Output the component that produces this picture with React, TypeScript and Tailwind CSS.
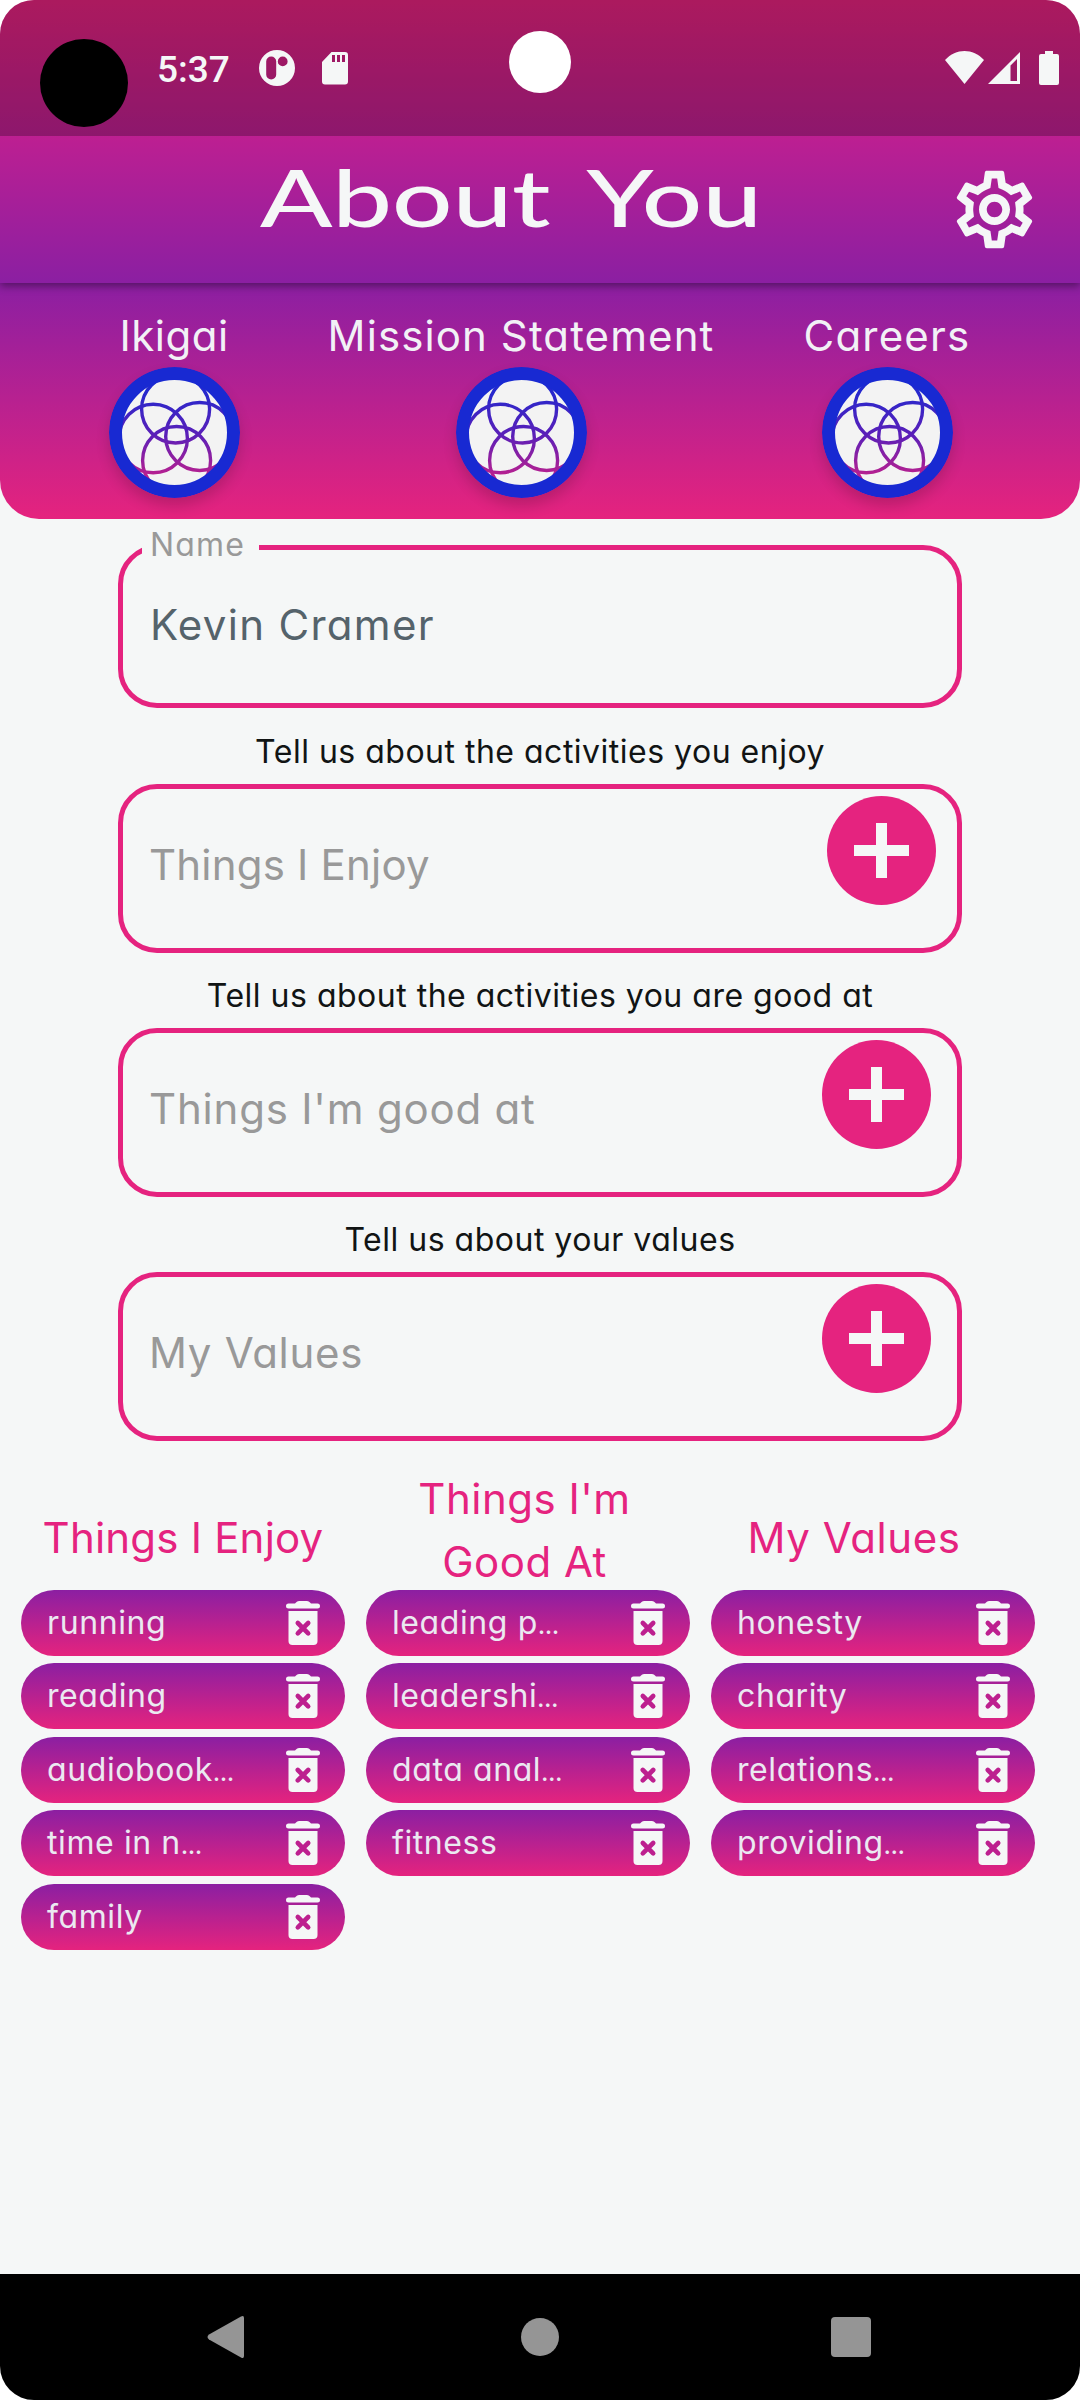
import { MdOutlineSettings } from 'react-icons/md';

const links = [
  { label: 'Ikigai', tracking: 'tracking-[0.5px]' },
  { label: 'Mission Statement', tracking: 'tracking-[1.1px]' },
  { label: 'Careers', tracking: 'tracking-[1.2px]' },
];

const fields = [
  { hint: 'Tell us about the activities you enjoy', placeholder: 'Things I Enjoy', tracking: 'tracking-[0.2px]', button: 'mr-[21px]' },
  { hint: 'Tell us about the activities you are good at', placeholder: "Things I'm good at", tracking: 'tracking-[0.8px]', button: 'mr-[26px]' },
  { hint: 'Tell us about your values', placeholder: 'My Values', tracking: 'tracking-[0.7px]', button: 'mr-[26px]' },
];

const lists = [
  { title: 'Things I Enjoy', heading: 'pt-[19px] tracking-[0.2px]', items: ['running', 'reading', 'audiobook…', 'time in n…', 'family'] },
  { title: "Things I'm Good At", heading: 'pl-[30px] pr-[37px] pt-[5px] tracking-[0.5px]', items: ['leading p…', 'leadershi…', 'data anal…', 'fitness'] },
  { title: 'My Values', heading: 'pr-[38px] pt-[19px] tracking-[0.6px]', items: ['honesty', 'charity', 'relations…', 'providing…'] },
];

function StatusBar() {
  return (
    <div className="relative flex h-[136px] items-start bg-black/25 text-[#f5f7f7]">
      <div className="ml-10 mt-[39px] size-[88px] rounded-full bg-black" />
      <div className="ml-[29px] mt-[48px] w-[102px] font-['Roboto'] text-[37px] font-medium leading-[44px]">5:37</div>
      <svg className="mt-[50px] h-9 w-9" viewBox="0 0 36 36" fill="currentColor">
        <path
          fillRule="evenodd"
          d="M18 0a18 18 0 1 0 0 36a18 18 0 1 0 0-36zM12.200 6.500a5 5 0 0 1 5 5v13a5 5 0 0 1-10 0v-13a5 5 0 0 1 5-5zM23.700 6.500a4.900 4.900 0 1 1 0 9.800a4.900 4.900 0 1 1 0-9.800z"
        />
      </svg>
      <svg className="ml-[27px] mt-[52px] h-[33px] w-[26px]" viewBox="0 0 26 33" fill="currentColor">
        <path fillRule="evenodd" d="M9.500 0H23a3 3 0 0 1 3 3v26.500a3 3 0 0 1-3 3H3a3 3 0 0 1-3-3V10zM10 3v7h3V3zM15 3v7h3V3zM20 3v7h3V3z" />
      </svg>
      <div className="absolute left-[509px] top-[31px] size-[62px] rounded-full bg-white" />
      <svg className="ml-auto mr-[4px] mt-[51px] h-[33px] w-[39px]" viewBox="0 0 39 33" fill="currentColor">
        <path d="M19.500 33L0 9C11 -3 28 -3 39 9z" />
      </svg>
      <svg className="mr-[19px] mt-[52px] h-8 w-[32px]" viewBox="0 0 32 32" fill="currentColor">
        <path fillRule="evenodd" d="M32 0v32H0zM22.500 13.500V29H29V7z" />
      </svg>
      <svg className="mr-[21px] mt-[51px] h-[34px] w-5" viewBox="0 0 20 34" fill="currentColor">
        <path d="M6 0h8v3h4a2 2 0 0 1 2 2v27a2 2 0 0 1-2 2H2a2 2 0 0 1-2-2V5a2 2 0 0 1 2-2h4z" />
      </svg>
    </div>
  );
}

function IkigaiLogo() {
  return (
    <svg className="size-[131px] rounded-full shadow-[0_8px_14px_rgba(0,0,0,0.16)]" viewBox="0 0 131 131" fill="none">
      <defs>
        <linearGradient id="rings" gradientUnits="userSpaceOnUse" x1="0" y1="15" x2="0" y2="112">
          <stop offset="0" stopColor="#1a2ad2" />
          <stop offset="0.55" stopColor="#5b1fb8" />
          <stop offset="1" stopColor="#c0208c" />
        </linearGradient>
      </defs>
      <circle cx="65.500" cy="65.500" r="60" fill="#f3f3f3" />
      <g stroke="url(#rings)" strokeWidth="3.400">
        <circle cx="66.600" cy="42" r="34" />
        <circle cx="44.200" cy="71.500" r="34.200" />
        <circle cx="90.700" cy="69.500" r="34" />
        <circle cx="67.600" cy="93.500" r="34" />
      </g>
      <circle cx="65.500" cy="65.500" r="59" stroke="#1829d2" strokeWidth="13" />
    </svg>
  );
}

function TrashIcon() {
  return (
    <svg className="h-11 w-[34px]" viewBox="0 0 34 44" fill="#f5f7f7">
      <path d="M10 1.500Q11 0 13 0h8q2 0 3 1.500l1 1h6.500a2.500 2.500 0 0 1 0 5h-29a2.500 2.500 0 0 1 0-5H9z" />
      <path d="M2.500 10h29v30a4 4 0 0 1-4 4H6.500a4 4 0 0 1-4-4z" />
      <path d="M11.800 22l10.400 10.400M22.200 22L11.800 32.400" stroke="#bd208f" strokeWidth="4.600" strokeLinecap="round" />
    </svg>
  );
}

function PlusButton({ className }: { className: string }) {
  return (
    <button className={`mt-[7px] flex size-[109px] items-center justify-center rounded-full bg-[#e5237f] ${className}`}>
      <svg className="size-[55px]" viewBox="0 0 55 55" fill="#f5f7f7">
        <path d="M22 0h11v22h22v11H33v22H22V33H0V22h22z" />
      </svg>
    </button>
  );
}

function ItemPill({ item }: { item: string }) {
  const truncated = item.endsWith('…');

  return (
    <li className="flex h-[65.800px] items-center justify-between rounded-full bg-linear-to-b/srgb from-[#8b1fa2] to-[#e5237e] pl-[26px] pr-[25px]">
      <span className="text-[32px] leading-[48px] tracking-[0.6px] text-[#ebe9f1]">
        {truncated ? item.slice(0, -1) : item}
        {truncated && <span className="text-[22px] font-semibold leading-none">…</span>}
      </span>
      <TrashIcon />
    </li>
  );
}

export default function App() {
  return (
    <div className="h-[2400px] w-[1080px] bg-white">
      <div className="flex h-full flex-col overflow-hidden rounded-[34px] bg-[#f5f7f7] font-['Inter','Open_Sans',sans-serif] [font-feature-settings:'cv11']">
        <header className="relative z-10 h-[283px] bg-linear-to-b/srgb from-[#e5237e] via-[#bb1f92] to-[#8b1fa2] shadow-[0_3px_8px_rgba(0,0,0,0.4)]">
          <StatusBar />
          <div className="flex h-[147px] items-center justify-between pl-[260px] pr-[39px] text-[#f5f7f7]">
            <h1 className="-mt-7 origin-left scale-x-[1.33] whitespace-nowrap font-['Lato'] text-[80px] font-medium leading-none [word-spacing:10px]">About You</h1>
            <MdOutlineSettings className="size-[93px]" />
          </div>
        </header>

        <nav className="grid h-[236px] grid-cols-[348px_346px_386px] rounded-b-[39px] bg-linear-to-b/srgb from-[#8b1fa2] to-[#e5237e] pt-[23px] text-[42px] leading-[60px] text-[#f2f1f6]">
          {links.map(link => (
            <a key={link.label} className="flex flex-col items-center gap-px whitespace-nowrap">
              <span className={link.tracking}>{link.label}</span>
              <IkigaiLogo />
            </a>
          ))}
        </nav>

        <main className="flex flex-1 flex-col">
          <div className="relative mx-[118px] mb-px mt-[26px] h-[163px] rounded-[39px] border-[5px] border-[#e5237f] pl-[27px]">
            <span className="absolute -top-[25px] left-[19px] w-[117px] bg-[#f5f7f7] pl-[8px] text-[32px] leading-[40px] tracking-[1.2px] text-[#999]">Name</span>
            <p className="mt-[50px] text-[42px] leading-[50px] tracking-[1.3px] text-[#55636b]">Kevin Cramer</p>
          </div>

          {fields.map(field => (
            <div key={field.placeholder} className="mx-[118px]">
              <p className="flex h-[75px] items-center justify-center pt-[10px] text-[32px] tracking-[0.5px] text-[#111414] whitespace-nowrap">{field.hint}</p>
              <div className="flex h-[169px] justify-between rounded-[39px] border-[5px] border-[#e5237f] pl-[26px]">
                <span className={`mt-[51px] text-[42px] leading-[50px] text-[#999] ${field.tracking}`}>{field.placeholder}</span>
                <PlusButton className={field.button} />
              </div>
            </div>
          ))}

          <div className="mt-[24px] flex gap-[21px] pl-[21px]">
            {lists.map(list => (
              <section key={list.title} className="w-[324px]">
                <h2 className={`flex h-[125px] items-center justify-center text-center text-[42px] leading-[63px] text-[#e5237f] ${list.heading}`}>
                  <span>{list.title}</span>
                </h2>
                <ul className="flex flex-col gap-[7.700px]">
                  {list.items.map(item => (
                    <ItemPill key={item} item={item} />
                  ))}
                </ul>
              </section>
            ))}
          </div>
        </main>

        <footer className="flex h-[126px] items-center bg-black">
          <svg className="ml-[207px] h-[42px] w-[37px]" viewBox="0 0 37 42" fill="#959595">
            <path d="M34 .5Q37-1 37 2v38q0 3-3 1.500L2 23.500Q-1 21 2 18.500z" />
          </svg>
          <div className="ml-[277px] size-[38px] rounded-full bg-[#959595]" />
          <div className="ml-[272px] size-10 rounded-[4px] bg-[#959595]" />
        </footer>
      </div>
    </div>
  );
}
